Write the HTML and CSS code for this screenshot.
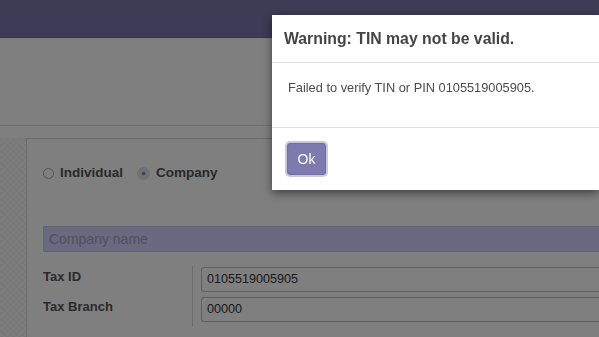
FILE: index.html
```html
<!DOCTYPE html>
<html lang="en">
<head>
  <meta charset="UTF-8">
  <title>Partner – TIN check</title>
  <link rel="stylesheet" href="styles.css">
</head>
<body>

  <!-- TOP BAR -->
  <header class="navbar"></header>

  <!-- CONTROL PANEL -->
  <div class="control-panel"></div>

  <!-- FORM -->
  <main class="content">
    <div class="sheet-wrap">
      <div class="sheet">
        <div class="company-type">
          <label class="radio"><span class="radio-dot"></span>Individual</label>
          <label class="radio checked"><span class="radio-dot"></span>Company</label>
        </div>

        <div class="name-field">Company name</div>

        <div class="tax-group">
          <div class="tax-labels">
            <span>Tax ID</span>
            <span>Tax Branch</span>
          </div>
          <div class="tax-inputs">
            <div class="field">0105519005905</div>
            <div class="field">00000</div>
          </div>
        </div>
      </div>
    </div>
  </main>

  <!-- DIALOG -->
  <div class="backdrop"></div>
  <div class="modal">
    <div class="modal-header">
      <h4>Warning: TIN may not be valid.</h4>
    </div>
    <div class="modal-body">
      <p>Failed to verify TIN or PIN 0105519005905.</p>
    </div>
    <div class="modal-footer">
      <button class="btn-primary">Ok</button>
    </div>
  </div>

</body>
</html>
```

FILE: styles.css
```css
* {box-sizing: border-box; margin:0; padding:0;}
html, body {overflow:hidden;}
body {
  font-family:"Liberation Sans",Arial,sans-serif;
  font-size:13px; color:#4c4c4c;
  background:#fff;
  width:599px; height:337px;
}

.navbar {height:38px; background:#7a76ac; border-bottom:1px solid #6e6aa0;}
.control-panel {height:88px; background:#fff; border-bottom:1px solid #dcdcdc;}

.content {padding-top:12px;}
.sheet-wrap {
  padding-left:26px; height:199px;
  background-color:#f2f2f2;
  background-image:
    linear-gradient(45deg,#fafafa 25%,transparent 25%,transparent 75%,#fafafa 75%),
    linear-gradient(45deg,#fafafa 25%,transparent 25%,transparent 75%,#fafafa 75%);
  background-size:6px 6px; background-position:0 0,3px 3px;
}
.sheet {
  height:100%;
  background:#fff; border:1px solid #d6d6d6; border-right:none; border-bottom:none;
  padding:28px 0 0 16px;
}

.company-type {display:flex; gap:14px; font-size:13.5px; font-weight:bold; color:#555;}
.radio {display:flex; align-items:center; gap:6px; line-height:14px; margin-top:-1px;}
.radio-dot {
  width:11px; height:11px; border-radius:50%;
  border:1px solid #aaa; background:#fff;
}
.radio.checked .radio-dot {
  width:13px; height:13px; border:none;
  background:radial-gradient(circle,#8a88b8 0 1.6px,#e2e2e6 2.2px);
}

.name-field {
  margin-top:46px; height:26px;
  background:#d2d2ff; border:1px solid #c4c4e4; border-right:none; border-radius:2px 0 0 2px;
  padding:0 5px; line-height:24px; font-size:14px; color:#a0a0bc;
}

.tax-group {display:flex; margin-top:14px;}
.tax-labels {
  width:149px; display:flex; flex-direction:column; gap:11px;
  padding-top:1px; font-weight:bold; color:#555; line-height:19px;
}
.tax-inputs {
  flex:1; border-left:1px solid #d8d8d8;
  padding:1px 0 5px 8px; display:flex; flex-direction:column; gap:5px;
}
.field {
  height:25px; border:1px solid #c2c2c2; border-right:none; border-radius:3px 0 0 3px;
  padding:0 5px; line-height:23px; font-size:12.6px; color:#333;
}

/* overlay + dialog */
.backdrop {position:fixed; inset:0; background:rgba(0,0,0,.5);}
.modal {
  position:fixed; left:272px; right:0; top:15px;
  background:#fff; box-shadow:0 3px 9px rgba(0,0,0,.5);
}
.modal-header {padding:15px 12px 14px; border-bottom:1px solid #e2e2e6;}
.modal-header h4 {font-size:15.8px; line-height:18px; color:#444;}
.modal-body {padding:16px 16px 30px; border-bottom:1px solid #e2e2e6;}
.modal-body p {font-size:12.8px; line-height:18px; color:#4c4c4c;}
.modal-footer {padding:15px;}
.btn-primary {
  width:39px; height:32px;
  font-family:inherit; font-size:14px; color:#fff;
  background:#7c7aae; border:1px solid #6f6da2; border-radius:3px;
  box-shadow:0 0 0 2px #c9c8e0;
  cursor:pointer;
}
```
